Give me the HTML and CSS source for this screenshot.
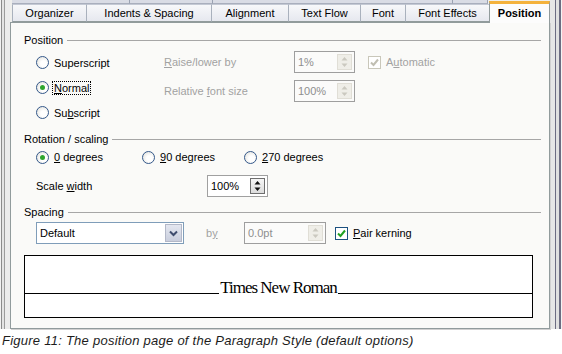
FILE: index.html
```html
<!DOCTYPE html>
<html lang="en">
<head>
    <meta charset="UTF-8">
    <title>Paragraph Style - Position</title>
    <link rel="stylesheet" href="styles.css">
</head>
<body>
    <div class="window">
        <div class="tabs-back">
            <span class="back-tab w1"></span>
            <span class="back-tab w2"></span>
            <span class="back-tab w3"></span>
            <span class="back-tab w4"></span>
        </div>
        <div class="tabs">
            <div class="tab organizer">Organizer</div>
            <div class="tab indents">Indents &amp; Spacing</div>
            <div class="tab alignment">Alignment</div>
            <div class="tab textflow">Text Flow</div>
            <div class="tab font">Font</div>
            <div class="tab effects">Font Effects</div>
            <div class="tab active">Position</div>
        </div>

        <div class="panel">
            <div class="group-title">Position</div>
            <div class="pos-body">
                <div class="radios">
                    <label class="radio-row"><span class="radio"></span><span>Superscript</span></label>
                    <label class="radio-row"><span class="radio checked"></span><span class="focus"><u>N</u>ormal</span></label>
                    <label class="radio-row"><span class="radio"></span><span>Su<u>b</u>script</span></label>
                </div>
                <div class="pos-fields">
                    <span class="disabled"><u>R</u>aise/lower by</span>
                    <div class="spin off">
                        <span class="value">1%</span>
                        <span class="spin-btn">
                            <svg width="7" height="12" viewBox="0 0 7 12"><path d="M3.5 1 L6.5 4.5 H0.5 Z M3.5 11 L6.5 7.5 H0.5 Z" fill="currentColor"/></svg>
                        </span>
                    </div>
                    <label class="check-row disabled"><span class="checkbox off"><svg width="9" height="9" viewBox="0 0 9 9"><path d="M1 4.5 L3.5 7 L8 1.5" fill="none" stroke="currentColor" stroke-width="2"/></svg></span><span>A<u>u</u>tomatic</span></label>

                    <span class="disabled">Relative <u>f</u>ont size</span>
                    <div class="spin off">
                        <span class="value">100%</span>
                        <span class="spin-btn">
                            <svg width="7" height="12" viewBox="0 0 7 12"><path d="M3.5 1 L6.5 4.5 H0.5 Z M3.5 11 L6.5 7.5 H0.5 Z" fill="currentColor"/></svg>
                        </span>
                    </div>
                </div>
            </div>

            <div class="group-title rotation">Rotation / scaling</div>
            <div class="rot-row">
                <label class="rot-item first"><span class="radio checked"></span><span><u>0</u> degrees</span></label>
                <label class="rot-item second"><span class="radio"></span><span><u>9</u>0 degrees</span></label>
                <label class="rot-item"><span class="radio"></span><span><u>2</u>70 degrees</span></label>
            </div>
            <div class="scale-row">
                <span class="scale-label">Scale <u>w</u>idth</span>
                <div class="spin">
                    <span class="value">100%</span>
                    <span class="spin-btn">
                        <svg width="7" height="12" viewBox="0 0 7 12"><path d="M3.5 1 L6.5 4.5 H0.5 Z M3.5 11 L6.5 7.5 H0.5 Z" fill="currentColor"/></svg>
                    </span>
                </div>
            </div>

            <div class="group-title spacing">Spacing</div>
            <div class="spacing-row">
                <div class="select">
                    <span class="value">Default</span>
                    <span class="select-btn">
                        <svg width="9" height="7" viewBox="0 0 9 7"><path d="M1 1.5 L4.5 5 L8 1.5" fill="none" stroke="currentColor" stroke-width="2"/></svg>
                    </span>
                </div>
                <span class="by disabled">b<u>y</u></span>
                <div class="spin off wide">
                    <span class="value">0.0pt</span>
                    <span class="spin-btn">
                        <svg width="7" height="12" viewBox="0 0 7 12"><path d="M3.5 1 L6.5 4.5 H0.5 Z M3.5 11 L6.5 7.5 H0.5 Z" fill="currentColor"/></svg>
                    </span>
                </div>
                <label class="check-row kerning"><span class="checkbox on"><svg width="9" height="9" viewBox="0 0 9 9"><path d="M1 4.5 L3.5 7 L8 1.5" fill="none" stroke="currentColor" stroke-width="2"/></svg></span><span><u>P</u>air kerning</span></label>
            </div>

            <div class="preview">
                <div class="preview-top"><span class="sample">Times New Roman</span></div>
            </div>
        </div>
    </div>
    <p class="caption">Figure 11: The position page of the Paragraph Style (default options)</p>
</body>
</html>
```

FILE: styles.css
```css
body {
    margin: 0;
    background-color: white;
    font-family: "Liberation Sans", Arial, sans-serif;
    font-size: 11px;
    color: #000;
}

u {
    text-decoration: underline;
}

.window {
    width: 562px;
    height: 329px;
    box-sizing: border-box;
    padding: 0 12px 0 10px;
    background:
        linear-gradient(to right, #f2f2f2 0 1px, #8c8c8c 1px 2px, #e4e4e4 2px 4px, #9c9c9c 4px 5px, #ececec 5px 10px, transparent 10px),
        linear-gradient(to left, #f4f4f4 0 1px, #6c6c82 1px 3px, #e0e0e0 3px 6px, #6c6c82 6px 7px, #e6e6e6 7px 12px, transparent 12px),
        #efefed;
}

/* tabs */
.tabs-back {
    display: flex;
    height: 4px;
    margin-left: 2px;
}

.back-tab {
    height: 3px;
    background-color: #d9dce5;
    border-bottom: 1px solid #a9afbd;
    border-right: 1px solid #9aa2b2;
}

.w1 { width: 117px; }
.w2 { width: 82px; }
.w3 { width: 239px; }
.w4 { width: 34px; }

.tabs {
    display: flex;
    height: 18px;
    margin-left: 2px;
    align-items: flex-end;
}

.tab {
    height: 18px;
    box-sizing: border-box;
    line-height: 17px;
    text-align: center;
    background: linear-gradient(#f7f8fa, #e6e8ef);
    border-top: 1px solid #c4c9d4;
    border-left: 1px solid #a9b1bd;
    border-bottom: 1px solid #919b9c;
    white-space: nowrap;
}

.organizer { width: 74px; }
.indents { width: 125px; }
.alignment { width: 77px; }
.textflow { width: 72px; }
.font { width: 45px; }
.effects { width: 84px; }

.tab.active {
    position: relative;
    z-index: 1;
    width: 61px;
    height: 22px;
    margin-top: -3px;
    margin-bottom: -1px;
    line-height: 19px;
    font-weight: bold;
    background: #fcfcfc;
    border-top: 3px solid #f4b23c;
    border-left: 1px solid #919b9c;
    border-right: 1px solid #919b9c;
    border-bottom: none;
}

/* panel */
.panel {
    height: 307px;
    box-sizing: border-box;
    padding: 10px 8px 0 13px;
    background-color: #fafaf8;
    border: 1px solid #919b9c;
    box-shadow: 1px 1px 0 #d0d0d0;
}

.group-title {
    display: flex;
    align-items: center;
    height: 14px;
    gap: 4px;
}

.group-title::after {
    content: "";
    flex: 1;
    height: 1px;
    background-color: #a6a6a6;
}

.disabled {
    color: #a2a2a2;
}

/* radios and checkboxes */
.radio {
    width: 13px;
    height: 13px;
    box-sizing: border-box;
    border: 1px solid #34588a;
    border-radius: 50%;
    background: radial-gradient(circle at 60% 60%, #ffffff 30%, #dcdcd6);
    margin-right: 5px;
    display: flex;
    align-items: center;
    justify-content: center;
    flex-shrink: 0;
}

.radio.checked::after {
    content: "";
    width: 5px;
    height: 5px;
    border-radius: 50%;
    background-color: #2ea52e;
}

.checkbox {
    width: 13px;
    height: 13px;
    box-sizing: border-box;
    border: 1px solid #1c5180;
    background-color: #fff;
    margin-right: 5px;
    display: flex;
    align-items: center;
    justify-content: center;
}

.checkbox.on {
    color: #21a121;
}

.checkbox.off {
    border-color: #c9c7ba;
    color: #c0beb2;
}

.focus {
    outline: 1px dotted #000;
    outline-offset: 0;
    padding: 0 1px;
    margin-left: -1px;
}

/* position */
.pos-body {
    display: flex;
    margin: 3px 0 0 12px;
}

.radios {
    width: 128px;
}

.radio-row {
    display: flex;
    align-items: center;
    height: 25px;
}

.pos-fields {
    display: grid;
    grid-template-columns: 130px 61px auto;
    grid-auto-rows: 22px;
    row-gap: 7px;
    align-items: center;
    margin-top: 1px;
}

.check-row {
    display: flex;
    align-items: center;
}

.pos-fields .check-row {
    margin-left: 13px;
}

/* spin fields */
.spin {
    width: 61px;
    height: 22px;
    box-sizing: border-box;
    display: flex;
    align-items: center;
    padding-left: 3px;
    border: 1px solid #a0a0a0;
    background-color: #fff;
}

.spin .value {
    flex: 1;
}

.spin-btn {
    width: 15px;
    height: 16px;
    box-sizing: border-box;
    margin-right: 2px;
    display: flex;
    align-items: center;
    justify-content: center;
    border: 1px solid #6e6e6e;
    background: linear-gradient(#f6f6f6, #dcdcdc);
    color: #111;
}

.spin.off {
    border-color: #9e9e9e;
    background-color: #fbfbfa;
    color: #8e8e8e;
}

.spin.off .spin-btn {
    border-color: #e0ded6;
    background: #efeee8;
    color: #cbc9c0;
}

.spin.wide {
    width: 82px;
}

/* rotation */
.rotation {
    margin-top: 7px;
}

.rot-row {
    display: flex;
    align-items: center;
    height: 22px;
    margin-left: 12px;
}

.rot-item {
    display: flex;
    align-items: center;
}

.rot-item.first {
    width: 106px;
}

.rot-item.second {
    width: 102px;
}

.scale-row {
    display: flex;
    align-items: center;
    margin: 7px 0 0 12px;
}

.scale-label {
    width: 171px;
}

/* spacing */
.spacing {
    margin-top: 8px;
}

.spacing-row {
    display: flex;
    align-items: center;
    margin: 3px 0 0 12px;
}

.select {
    width: 148px;
    height: 22px;
    box-sizing: border-box;
    display: flex;
    align-items: center;
    padding-left: 3px;
    border: 1px solid #7f9db9;
    background-color: #fff;
}

.select .value {
    flex: 1;
}

.select-btn {
    width: 17px;
    height: 18px;
    box-sizing: border-box;
    margin-right: 1px;
    display: flex;
    align-items: center;
    justify-content: center;
    border: 1px solid #b3b8c8;
    background: linear-gradient(#e4e7f0, #c9cedd);
    color: #3f4d6e;
}

.by {
    width: 38px;
    margin-left: 22px;
}

.kerning {
    margin-left: 9px;
}

/* preview */
.preview {
    height: 63px;
    box-sizing: border-box;
    margin: 11px 8px 0 0;
    border: 1px solid #000;
    background-color: #fff;
}

.preview-top {
    height: 37px;
    border-bottom: 1px solid #000;
    display: flex;
    justify-content: center;
    align-items: flex-end;
}

.sample {
    font-family: "Liberation Serif", "Times New Roman", serif;
    font-size: 17px;
    letter-spacing: -1px;
    line-height: 17px;
    margin-bottom: -3px;
    background-color: #fff;
    padding: 0 1px;
}

.caption {
    margin: 0;
    padding-left: 2px;
    height: 25px;
    line-height: 24px;
    font-style: italic;
    font-size: 13px;
    letter-spacing: 0.25px;
    color: #1c1c1c;
}
```
